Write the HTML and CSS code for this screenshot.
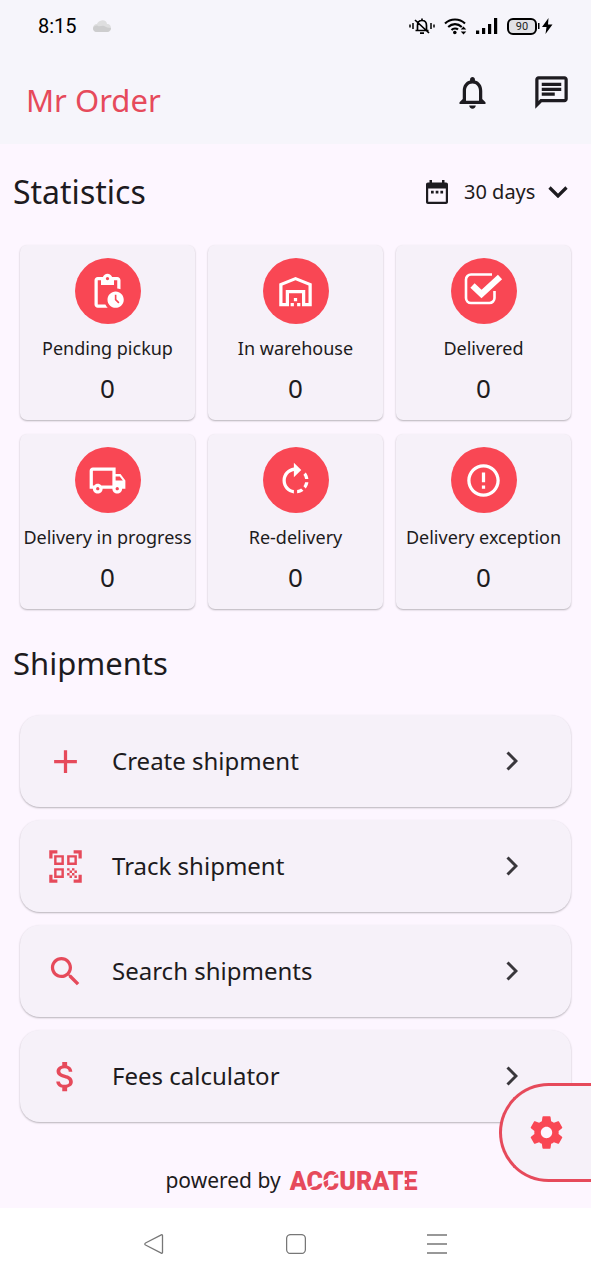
FILE: index.html
```html
<!DOCTYPE html>
<html lang="en">
<head>
<meta charset="utf-8">
<meta name="viewport" content="width=device-width, initial-scale=1">
<title>Mr Order</title>
<link rel="stylesheet" href="styles.css">
</head>
<body>
<div class="screen">
  <header class="top">
    <div class="status">
      <div class="status-side">
        <span class="clock">8:15</span>
        <svg class="cloud" viewBox="0 0 18 13" width="18" height="13" aria-hidden="true"><path fill="#dededf" d="M7 1c3-2 7 0 7 3 3 0 4 2 4 4.500S16 12 14 12H4C1 12 0 10 0 8s1.500-4 4-4c.5-1.500 1.500-2.500 3-3z"/><path fill="#cdcdce" d="M0 8c1-2 3-3 5-2s4-1 6 0 4 2 7 2c0 2-2 4-4 4H4c-3 0-4-2-4-4z"/></svg>
      </div>
      <div class="status-side status-icons">
        <svg viewBox="0 0 26 18" width="26" height="18" fill="none" stroke="#000" aria-hidden="true"><path stroke-width="1.500" d="M1 7.500v3M4 6v6M22 6v6M25 7.500v3"/><path stroke-width="1.700" d="M6.500 13.500h13M8.500 13V8.500c0-3 1.500-5 4.500-5s4.500 2 4.500 5V13M6 3l14 13M13 1.500V3M11 16.200h4"/></svg>
        <svg viewBox="0 0 23 18" width="23" height="18" aria-hidden="true"><g fill="none" stroke="#000" stroke-width="2.100"><path d="M1 6.500c5.500-5.400 14.500-5.400 20 0M4.200 10c4-3.800 9.600-3.800 13.600 0M7.500 13c2-2 5-2 6.500-.5"/></g><circle cx="10.800" cy="15.500" r="1.800"/><path d="M19.500 9.500l2.800 3h-5.600zM19.500 17.500l2.800-3h-5.600z"/></svg>
        <svg viewBox="0 0 22 18" width="22" height="18" aria-hidden="true"><path d="M0 13.500h3.200V17H0zM6 11h3.200v6H6zM12 7h3.200v10H12zM18 1h3.200v16H18z"/></svg>
        <span class="battery">90</span>
        <svg viewBox="0 0 15 18" width="15" height="18" aria-hidden="true"><path d="M0 6h1.500v6H0zM10.500 1L4 10h4.500L7.500 17 14.500 7.500H10z"/></svg>
      </div>
    </div>
    <div class="appbar">
      <h1 class="brand">Mr Order</h1>
      <div class="actions">
        <button class="icon-btn" aria-label="Notifications"><svg viewBox="0 0 24 24" width="39" height="39"><path d="M12 22c1.100 0 2-.9 2-2h-4c0 1.100.9 2 2 2zm6-6v-5c0-3.070-1.630-5.640-4.500-6.320V4c0-.83-.67-1.500-1.500-1.500s-1.500.67-1.500 1.500v.68C7.640 5.360 6 7.920 6 11v5l-2 2v1h16v-1l-2-2zm-2 1H8v-6c0-2.480 1.510-4.500 4-4.500s4 2.020 4 4.500v6z"/></svg></button>
        <button class="icon-btn" aria-label="Messages"><svg viewBox="0 0 24 24" width="39" height="39"><path d="M4 4h16v12H5.170L4 17.170V4m0-2c-1.100 0-1.990.9-1.990 2L2 22l4-4h14c1.100 0 2-.9 2-2V4c0-1.100-.9-2-2-2H4zm2 10h8v2H6v-2zm0-3h12v2H6V9zm0-3h12v2H6V6z"/></svg></button>
      </div>
    </div>
  </header>

  <main class="content">
    <div class="heading-row">
      <h2 class="heading">Statistics</h2>
      <label class="period">
        <svg viewBox="0 0 22 24" width="22" height="24" aria-hidden="true"><path fill="#1d1b20" fill-rule="evenodd" d="M3.500 0h2.500v2.500h10V0h2.500v2.500H20c1.200 0 2 .8 2 2V22c0 1.200-.8 2-2 2H2c-1.200 0-2-.8-2-2V4.500c0-1.200.8-2 2-2h1.500zM2.200 8.500v13.300h17.600v-13.300zM5 10.800h2.700v2.600H5zm4.700 0h2.700v2.600H9.700zm4.700 0h2.700v2.600h-2.700z"/></svg>
        <select class="period-select" aria-label="Period"><option>30 days</option></select>
        <svg class="caret" viewBox="0 0 20 12" width="20" height="12" aria-hidden="true"><path fill="none" stroke="#1d1b20" stroke-width="3.200" d="M1.500 1.500l8.500 8.500 8.500-8.500"/></svg>
      </label>
    </div>

    <section class="stats" aria-label="Statistics">
      <article class="stat">
        <span class="disc"><svg viewBox="0 0 24 24" width="39" height="39"><path d="M17 12c-2.760 0-5 2.240-5 5s2.240 5 5 5 5-2.240 5-5-2.240-5-5-5zm1.650 7.350L16.500 17.200V14h1v2.790l1.850 1.850-.7.71zM18 3h-3.180C14.400 1.840 13.300 1 12 1s-2.400.84-2.820 2H6c-1.100 0-2 .9-2 2v15c0 1.100.9 2 2 2h6.110c-.59-.57-1.070-1.250-1.420-2H6V5h2v3h8V5h2v5.080c.71.1 1.380.31 2 .6V5c0-1.100-.9-2-2-2zm-6 2c-.55 0-1-.45-1-1s.45-1 1-1 1 .45 1 1-.45 1-1 1z"/></svg></span>
        <h3 class="stat-name">Pending pickup</h3>
        <p class="stat-value">0</p>
      </article>
      <article class="stat">
        <span class="disc"><svg viewBox="0 0 24 24" width="39" height="39"><path d="M20 8.350V19h-2v-8H6v8H4V8.350l8-3.200 8 3.200zM22 21V7L12 3 2 7v14h6v-8h8v8h6zm-11-2H9v2h2v-2zm2-3h-2v2h2v-2zm2 3h-2v2h2v-2z"/></svg></span>
        <h3 class="stat-name">In warehouse</h3>
        <p class="stat-value">0</p>
      </article>
      <article class="stat">
        <span class="disc"><svg viewBox="0 0 39 39" width="39" height="39"><path fill="none" stroke="#fff" stroke-width="2.600" d="M28 2.500H7a5 5 0 0 0-5 5v18.500a5 5 0 0 0 5 5h18.500a5 5 0 0 0 5-5V19"/><path fill="none" stroke="#fff" stroke-width="6.200" d="M8.500 13.500l9 8.500L36 5"/></svg></span>
        <h3 class="stat-name">Delivered</h3>
        <p class="stat-value">0</p>
      </article>
      <article class="stat">
        <span class="disc"><svg viewBox="0 0 24 24" width="39" height="39"><path fill-rule="evenodd" d="M20 8h-3V4H3c-1.100 0-2 .9-2 2v11h2c0 1.660 1.340 3 3 3s3-1.340 3-3h6c0 1.660 1.340 3 3 3s3-1.340 3-3h2v-5l-3-4zm-.5 1.500l1.960 2.500H17V9.500h2.500zM6 18c-.55 0-1-.45-1-1s.45-1 1-1 1 .45 1 1-.45 1-1 1zm2.220-3c-.55-.61-1.330-1-2.220-1s-1.670.39-2.220 1H3V6h12v9H8.220zM18 18c-.55 0-1-.45-1-1s.45-1 1-1 1 .45 1 1-.45 1-1 1z"/></svg></span>
        <h3 class="stat-name">Delivery in progress</h3>
        <p class="stat-value">0</p>
      </article>
      <article class="stat">
        <span class="disc"><svg viewBox="0 0 24 24" width="39" height="39"><path d="M15.550 5.550L11 1v3.070C7.060 4.560 4 7.920 4 12s3.050 7.440 7 7.930v-2.020c-2.840-.48-5-2.940-5-5.910s2.160-5.430 5-5.910V10l4.550-4.450zM19.930 11c-.17-1.390-.72-2.730-1.620-3.890l-1.420 1.420c.54.75.88 1.600 1.020 2.470h2.020zM13 17.900v2.020c1.390-.17 2.740-.71 3.900-1.610l-1.440-1.440c-.75.54-1.590.89-2.460 1.030zm3.890-2.420l1.420 1.410c.9-1.160 1.450-2.500 1.620-3.890h-2.020c-.14.87-.48 1.720-1.020 2.480z"/></svg></span>
        <h3 class="stat-name">Re-delivery</h3>
        <p class="stat-value">0</p>
      </article>
      <article class="stat">
        <span class="disc"><svg viewBox="0 0 24 24" width="39" height="39"><path d="M11 15h2v2h-2zm0-8h2v6h-2zm.990-5C6.470 2 2 6.480 2 12s4.470 10 9.990 10C17.520 22 22 17.520 22 12S17.520 2 11.990 2zM12 20c-4.420 0-8-3.580-8-8s3.580-8 8-8 8 3.580 8 8-3.580 8-8 8z"/></svg></span>
        <h3 class="stat-name">Delivery exception</h3>
        <p class="stat-value">0</p>
      </article>
    </section>

    <div class="heading-row heading-row-plain">
      <h2 class="heading">Shipments</h2>
    </div>

    <nav class="menu" aria-label="Shipments">
      <button class="row">
        <svg class="row-icon" viewBox="0 0 24 24" width="39" height="39"><path d="M19 13h-6v6h-2v-6H5v-2h6V5h2v6h6v2z"/></svg>
        <span class="row-label">Create shipment</span>
        <svg class="chevron" viewBox="0 0 12 20" width="12" height="20"><path d="M1.500 1.500L10 10l-8.500 8.500"/></svg>
      </button>
      <button class="row">
        <svg class="row-icon" viewBox="0 0 24 24" width="39" height="39"><path d="M9.500 6.500v3h-3v-3h3M11 5H5v6h6V5zm-1.500 9.500v3h-3v-3h3M11 13H5v6h6v-6zm6.500-6.500v3h-3v-3h3M19 5h-6v6h6V5zm-6 8h1.500v1.500H13V13zm1.500 1.500H16V16h-1.500v-1.500zM16 13h1.500v1.500H16V13zm-3 3h1.500v1.500H13V16zm1.500 1.500H16V19h-1.500v-1.500zM16 16h1.500v1.500H16V16zm1.500-1.500H19V16h-1.500v-1.500zm0 3H19V19h-1.500v-1.500zM22 7h-2V4h-3V2h5v5zm0 15v-5h-2v3h-3v2h5zM2 22h5v-2H4v-3H2v5zM2 2v5h2V4h3V2H2z"/></svg>
        <span class="row-label">Track shipment</span>
        <svg class="chevron" viewBox="0 0 12 20" width="12" height="20"><path d="M1.500 1.500L10 10l-8.500 8.500"/></svg>
      </button>
      <button class="row">
        <svg class="row-icon" viewBox="0 0 24 24" width="39" height="39"><path d="M15.500 14h-.79l-.28-.27C15.410 12.590 16 11.110 16 9.500 16 5.910 13.090 3 9.500 3S3 5.910 3 9.500 5.910 16 9.500 16c1.610 0 3.090-.59 4.230-1.570l.27.28v.79l5 4.990L20.490 19l-4.990-5zm-6 0C7.010 14 5 11.990 5 9.500S7.010 5 9.500 5 14 7.010 14 9.500 11.990 14 9.500 14z"/></svg>
        <span class="row-label">Search shipments</span>
        <svg class="chevron" viewBox="0 0 12 20" width="12" height="20"><path d="M1.500 1.500L10 10l-8.500 8.500"/></svg>
      </button>
      <button class="row">
        <svg class="row-icon" viewBox="0 0 24 24" width="39" height="39"><path d="M11.800 10.900c-2.270-.59-3-1.200-3-2.150 0-1.090 1.010-1.850 2.700-1.850 1.780 0 2.440.85 2.500 2.100h2.210c-.07-1.720-1.120-3.300-3.210-3.810V3h-3v2.160c-1.940.42-3.500 1.680-3.500 3.610 0 2.310 1.910 3.460 4.700 4.130 2.500.6 3 1.480 3 2.410 0 .69-.49 1.790-2.700 1.790-2.060 0-2.870-.92-2.980-2.100h-2.200c.12 2.190 1.760 3.420 3.680 3.830V21h3v-2.150c1.950-.37 3.500-1.500 3.500-3.550 0-2.840-2.430-3.810-4.700-4.400z"/></svg>
        <span class="row-label">Fees calculator</span>
        <svg class="chevron" viewBox="0 0 12 20" width="12" height="20"><path d="M1.500 1.500L10 10l-8.500 8.500"/></svg>
      </button>
    </nav>

    <footer class="powered">
      <span>powered by</span>
      <span class="maker">ACCURATE
        <svg class="maker-cuts" viewBox="0 0 128 20" width="128" height="20" aria-hidden="true"><path fill="none" stroke="#fdf6ff" stroke-width="1.500" d="M18 16C28 12 38 8 48 1M34 19c4-5 8-9 14-12"/><path fill="#fdf6ff" d="M113 5.500h4v2.500h-4zM113 12h4v2.500h-4z"/></svg>
      </span>
    </footer>
  </main>

  <div class="sysnav">
    <button class="icon-btn" aria-label="Back"><svg viewBox="0 0 20 20" width="20" height="20"><path d="M18.500 1.500v17c0 .8-.6 1-1.200.7L1.500 11c-.9-.5-.9-1.500 0-2L17.300.8c.6-.3 1.200-.1 1.200.7z"/></svg></button>
    <button class="icon-btn" aria-label="Home"><svg viewBox="0 0 20 20" width="20" height="20"><rect x=".6" y=".6" width="18.800" height="18.800" rx="4"/></svg></button>
    <button class="icon-btn" aria-label="Recent apps"><svg viewBox="0 0 20 20" width="20" height="20"><path d="M0 1h20M0 10h20M0 19h20"/></svg></button>
  </div>

  <button class="fab" aria-label="Settings"><svg viewBox="0 0 24 24" width="39" height="39"><circle cx="12" cy="12" r="4" fill="#fdf6ff"/><path d="M19.430 12.980c.04-.32.07-.64.07-.98s-.03-.66-.07-.98l2.110-1.650c.19-.15.24-.42.12-.64l-2-3.460c-.12-.22-.39-.3-.61-.22l-2.490 1c-.52-.4-1.080-.73-1.690-.98l-.38-2.650C14.460 2.180 14.250 2 14 2h-4c-.25 0-.46.18-.49.42l-.38 2.650c-.61.25-1.170.59-1.690.98l-2.490-1c-.23-.09-.49 0-.61.22l-2 3.460c-.13.22-.07.49.12.64l2.110 1.650c-.04.32-.07.65-.07.98s.03.66.07.98l-2.110 1.650c-.19.15-.24.42-.12.64l2 3.460c.12.22.39.3.61.22l2.490-1c.52.4 1.080.73 1.690.98l.38 2.650c.03.24.24.42.49.42h4c.25 0 .46-.18.49-.42l.38-2.650c.61-.25 1.170-.59 1.690-.98l2.490 1c.23.09.49 0 .61-.22l2-3.460c.12-.22.07-.49-.12-.64l-2.110-1.650zM12 15.500c-1.930 0-3.500-1.570-3.500-3.500s1.570-3.500 3.500-3.500 3.500 1.570 3.500 3.500-1.570 3.500-3.500 3.500z"/></svg></button>
</div>
</body>
</html>
```
FILE: styles.css
```css
:root {
  --ink: #1d1b20;
  --red: #f94754;
  --red-soft: #e64a5b;
  --page: #fdf6ff;
  --card: #f6f1f9;
}

* { box-sizing: border-box; }

body {
  margin: 0;
  background: var(--page);
  color: var(--ink);
  font-family: "Noto Sans", "Open Sans", sans-serif;
}

h1, h2, h3, p { margin: 0; font-weight: 400; }

button {
  margin: 0;
  padding: 0;
  border: 0;
  background: none;
  color: inherit;
  font: inherit;
  cursor: pointer;
}

svg { display: block; flex: none; }

.screen {
  position: relative;
  display: flex;
  flex-direction: column;
  min-height: 100vh;
}

.top { background: #f6f5fb; }

.status {
  display: flex;
  justify-content: space-between;
  align-items: center;
  height: 52px;
  padding: 0 38px;
}

.status-side { display: flex; align-items: center; gap: 16px; }
.status-icons { gap: 9px; }

.clock {
  color: #000;
  font-family: Roboto, sans-serif;
  font-size: 20px;
}

.battery {
  width: 30px;
  margin-right: -8px;
  border: 2px solid #000;
  border-radius: 6px;
  background: #e2e2e6;
  color: #222;
  font-family: Roboto, sans-serif;
  font-size: 11px;
  line-height: 13px;
  text-align: center;
}

.appbar {
  display: flex;
  justify-content: space-between;
  align-items: center;
  height: 92px;
  padding: 0 20px 12px 26px;
}

.brand {
  padding-top: 16px;
  color: var(--red-soft);
  font-size: 31px;
  line-height: 40px;
}

.actions { display: flex; gap: 40px; }
.icon-btn { display: grid; place-items: center; }
.icon-btn svg { fill: var(--ink); }

.content {
  flex: 1;
  display: flex;
  flex-direction: column;
}

.heading-row {
  display: flex;
  justify-content: space-between;
  align-items: center;
  height: 101px;
  padding: 0 23px 6px 13px;
}

.heading-row-plain { height: 106px; padding-top: 2px; padding-bottom: 0; }

.heading {
  font-size: 32px;
  line-height: 40px;
}

.heading-row-plain .heading { font-size: 31px; }

.period { display: flex; align-items: center; }

.period-select {
  width: 84px;
  margin-left: 16px;
  padding: 0;
  border: 0;
  appearance: none;
  background: none;
  color: inherit;
  font: inherit;
  font-size: 20px;
}

.stats {
  display: grid;
  grid-template-columns: repeat(3, minmax(0, 1fr));
  gap: 14px 13px;
  padding: 0 20px;
}

.stat {
  display: flex;
  flex-direction: column;
  align-items: center;
  height: 175px;
  padding-top: 13px;
  border-radius: 7px;
  background: var(--card);
  box-shadow: 0 1px 2px rgba(0, 0, 0, .28);
}

.disc {
  display: grid;
  place-items: center;
  width: 66px;
  height: 66px;
  border-radius: 50%;
  background: var(--red);
}

.disc svg { fill: #fff; }

.stat-name {
  margin-top: 12px;
  font-size: 18px;
  line-height: 24px;
  white-space: nowrap;
}

.stat-value {
  font-size: 26px;
  line-height: 36px;
  margin-top: 10px;
}

.menu {
  display: flex;
  flex-direction: column;
  gap: 13px;
  padding: 0 20px;
}

.row {
  display: flex;
  align-items: center;
  height: 92px;
  padding: 0 53px 0 26px;
  border-radius: 20px;
  background: var(--card);
  box-shadow: 0 1px 2px rgba(0, 0, 0, .28);
  text-align: left;
}

.row-icon { fill: var(--red-soft); }

.row-label {
  flex: 1;
  margin-left: 27px;
  font-size: 24px;
  line-height: 32px;
}

.chevron path { fill: none; stroke: #39373c; stroke-width: 3; }

.powered {
  display: flex;
  justify-content: center;
  align-items: center;
  gap: 9px;
  padding: 41px 8px 9px 0;
  font-size: 21px;
  line-height: 30px;
}

.maker {
  position: relative;
  padding-top: 4px;
  color: var(--red-soft);
  font-family: Roboto, sans-serif;
  font-size: 25px;
  font-weight: 900;
}

.maker-cuts { position: absolute; left: 0; top: 9px; }

.sysnav {
  display: flex;
  justify-content: space-between;
  align-items: center;
  height: 72px;
  padding: 0 144px;
  background: #fff;
}

.sysnav svg { fill: none; stroke: #777; stroke-width: 1.300; }

.fab {
  position: absolute;
  right: 0;
  bottom: 98px;
  width: 92px;
  height: 99px;
  padding-left: 25px;
  border: 3px solid var(--red-soft);
  border-right: 0;
  border-radius: 50px 0 0 50px;
  background: var(--card);
}

.fab svg { fill: var(--red); }
```
